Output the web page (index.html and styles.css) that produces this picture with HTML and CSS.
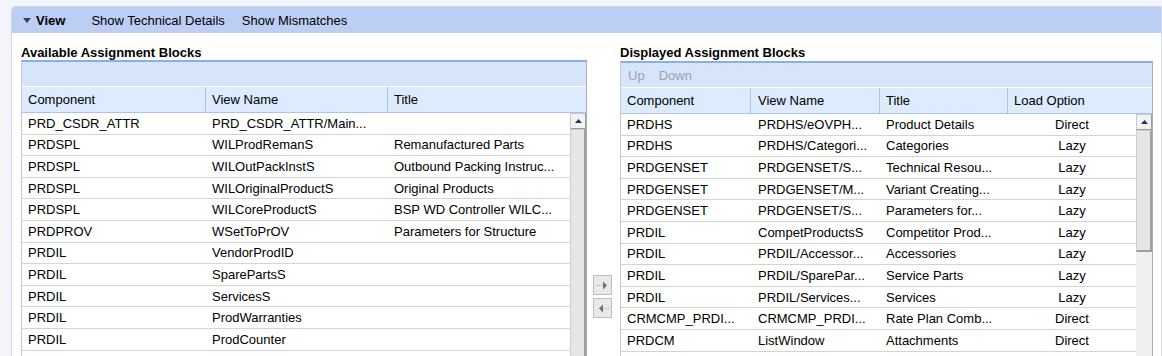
FILE: index.html
```html
<!DOCTYPE html>
<html lang="en">
<head>
  <meta charset="UTF-8" />
  <title>Assignment Blocks</title>
  <link rel="stylesheet" href="styles.css">
</head>
<body>
  <div class="panel">
    <div class="panel-header">
      <span class="view-toggle">
        <svg width="8" height="5" viewBox="0 0 8 5"><polygon points="0,0 8,0 4,5" fill="#3a3f4a"/></svg>
        View
      </span>
      <span class="header-link">Show Technical Details</span>
      <span class="header-link">Show Mismatches</span>
    </div>

    <div class="panel-body">
      <!-- Available blocks -->
      <div class="block block-left">
        <div class="block-title">Available Assignment Blocks</div>
        <div class="table">
          <div class="toolbar"></div>
          <div class="head-row cols-left">
            <div class="hcell">Component</div>
            <div class="hcell">View Name</div>
            <div class="hcell">Title</div>
          </div>
          <div class="table-body">
            <div class="rows">
              <div class="row cols-left"><span>PRD_CSDR_ATTR</span><span>PRD_CSDR_ATTR/Main...</span><span></span></div>
              <div class="row cols-left"><span>PRDSPL</span><span>WILProdRemanS</span><span>Remanufactured Parts</span></div>
              <div class="row cols-left"><span>PRDSPL</span><span>WILOutPackInstS</span><span>Outbound Packing Instruc...</span></div>
              <div class="row cols-left"><span>PRDSPL</span><span>WILOriginalProductS</span><span>Original Products</span></div>
              <div class="row cols-left"><span>PRDSPL</span><span>WILCoreProductS</span><span>BSP WD Controller WILC...</span></div>
              <div class="row cols-left"><span>PRDPROV</span><span>WSetToPrOV</span><span>Parameters for Structure</span></div>
              <div class="row cols-left"><span>PRDIL</span><span>VendorProdID</span><span></span></div>
              <div class="row cols-left"><span>PRDIL</span><span>SparePartsS</span><span></span></div>
              <div class="row cols-left"><span>PRDIL</span><span>ServicesS</span><span></span></div>
              <div class="row cols-left"><span>PRDIL</span><span>ProdWarranties</span><span></span></div>
              <div class="row cols-left"><span>PRDIL</span><span>ProdCounter</span><span></span></div>
              <div class="row cols-left"><span></span><span></span><span></span></div>
            </div>
            <div class="scrollbar">
              <div class="scroll-btn">
                <svg width="7" height="4" viewBox="0 0 7 4"><polygon points="0,4 7,4 3.5,0" fill="#1f3566"/></svg>
              </div>
              <div class="scroll-thumb thumb-long"></div>
            </div>
          </div>
        </div>
      </div>

      <!-- Move buttons -->
      <div class="move-buttons">
        <div class="move-btn">
          <svg width="14" height="13" viewBox="0 0 14 13">
            <path d="M1 6.5h1M3 6.5h1M5 6.5h1" stroke="#a8a8a8"/>
            <polygon points="7,2.5 11,6.5 7,10.5" fill="#6f6f6f"/>
          </svg>
        </div>
        <div class="move-btn">
          <svg width="14" height="13" viewBox="0 0 14 13">
            <polygon points="7,2.5 3,6.5 7,10.5" fill="#6f6f6f"/>
            <path d="M8 6.5h1M10 6.5h1M12 6.5h1" stroke="#a8a8a8"/>
          </svg>
        </div>
      </div>

      <!-- Displayed blocks -->
      <div class="block block-right">
        <div class="block-title">Displayed Assignment Blocks</div>
        <div class="table">
          <div class="toolbar">
            <span class="tool-link">Up</span>
            <span class="tool-link">Down</span>
          </div>
          <div class="head-row cols-right">
            <div class="hcell">Component</div>
            <div class="hcell">View Name</div>
            <div class="hcell">Title</div>
            <div class="hcell">Load Option</div>
          </div>
          <div class="table-body">
            <div class="rows">
              <div class="row cols-right"><span>PRDHS</span><span>PRDHS/eOVPH...</span><span>Product Details</span><span class="center">Direct</span></div>
              <div class="row cols-right"><span>PRDHS</span><span>PRDHS/Categori...</span><span>Categories</span><span class="center">Lazy</span></div>
              <div class="row cols-right"><span>PRDGENSET</span><span>PRDGENSET/S...</span><span>Technical Resou...</span><span class="center">Lazy</span></div>
              <div class="row cols-right"><span>PRDGENSET</span><span>PRDGENSET/M...</span><span>Variant Creating...</span><span class="center">Lazy</span></div>
              <div class="row cols-right"><span>PRDGENSET</span><span>PRDGENSET/S...</span><span>Parameters for...</span><span class="center">Lazy</span></div>
              <div class="row cols-right"><span>PRDIL</span><span>CompetProductsS</span><span>Competitor Prod...</span><span class="center">Lazy</span></div>
              <div class="row cols-right"><span>PRDIL</span><span>PRDIL/Accessor...</span><span>Accessories</span><span class="center">Lazy</span></div>
              <div class="row cols-right"><span>PRDIL</span><span>PRDIL/SparePar...</span><span>Service Parts</span><span class="center">Lazy</span></div>
              <div class="row cols-right"><span>PRDIL</span><span>PRDIL/Services...</span><span>Services</span><span class="center">Lazy</span></div>
              <div class="row cols-right"><span>CRMCMP_PRDI...</span><span>CRMCMP_PRDI...</span><span>Rate Plan Comb...</span><span class="center">Direct</span></div>
              <div class="row cols-right"><span>PRDCM</span><span>ListWindow</span><span>Attachments</span><span class="center">Direct</span></div>
              <div class="row cols-right"><span></span><span></span><span></span><span></span></div>
            </div>
            <div class="scrollbar">
              <div class="scroll-btn">
                <svg width="7" height="4" viewBox="0 0 7 4"><polygon points="0,4 7,4 3.5,0" fill="#1f3566"/></svg>
              </div>
              <div class="scroll-thumb thumb-short"></div>
            </div>
          </div>
        </div>
      </div>
    </div>
  </div>
</body>
</html>
```

FILE: styles.css
```css
* {
  box-sizing: border-box;
}

body {
  margin: 0;
  height: 356px;
  overflow: hidden;
  background: #f4f5fa;
  color: #000;
  font-family: "Liberation Sans", Arial, sans-serif;
  font-size: 13px;
}

.panel {
  margin: 6px 0 0 11px;
  background: #fff;
  border: 1px solid #cfd6e4;
  border-right-color: #d8dce6;
  border-radius: 5px 0 0 0;
  height: 400px;
}

.panel-header {
  height: 26px;
  display: flex;
  align-items: center;
  padding-left: 11px;
  background: #bdcef4;
  border-radius: 4px 0 0 0;
}

.view-toggle {
  display: flex;
  align-items: center;
  gap: 5px;
  font-weight: bold;
  margin-right: 26px;
}

.header-link {
  margin-right: 17px;
}

.panel-body {
  display: flex;
  padding: 12px 0 0 9px;
}

.block-left {
  width: 566px;
}

.block-right {
  width: 533px;
}

.block-title {
  font-weight: bold;
  height: 15px;
  line-height: 15px;
}

.block-right .block-title {
  height: 16px;
}

.table {
  border-top: 2px solid #8aaeeb;
  border-left: 1px solid #c4c8cf;
  border-right: 1px solid #a9adb4;
}

.toolbar {
  height: 25px;
  background: #d6e5fa;
  border-bottom: 1px solid #fff;
  display: flex;
  align-items: center;
  padding-left: 7px;
  gap: 14px;
}

.tool-link {
  color: #9ba3ad;
}

.head-row {
  display: grid;
  height: 26px;
  background: #dcebfd;
  border-bottom: 1px solid #a8c4ee;
}

.hcell {
  display: flex;
  align-items: center;
  padding-left: 6px;
  border-right: 1px solid #a8c4ee;
}

.hcell:last-child {
  border-right: none;
}

.cols-left {
  grid-template-columns: 184px 182px 1fr;
}

.cols-right {
  grid-template-columns: 130px 129px 128px 1fr;
}

.table-body {
  display: flex;
}

.rows {
  flex: 1;
}

.row {
  display: grid;
  height: 21.6px;
  border-bottom: 1px solid #d4d4d4;
  align-items: center;
}

.row span {
  padding-left: 6px;
  white-space: nowrap;
  overflow: hidden;
}

.row span.center {
  text-align: center;
  padding-left: 0;
}

.cols-right .hcell:nth-child(2),
.cols-right span:nth-child(2) {
  padding-left: 7px;
}

.scrollbar {
  width: 16px;
  background: #f0f0f0;
  display: flex;
  flex-direction: column;
}

.scroll-btn {
  height: 16px;
  border: 1px solid #c9c9c9;
  border-right-color: #9a9a9a;
  border-bottom-color: #9a9a9a;
  background: #f3f3f3;
  display: flex;
  align-items: center;
  justify-content: center;
}

.scroll-thumb {
  background: #e6e6e6;
  border: 1px solid #cfcfcf;
  border-right: 2px solid #9f9f9f;
  border-bottom: 2px solid #9f9f9f;
}

.thumb-long {
  height: 300px;
}

.thumb-short {
  height: 122px;
}

.move-buttons {
  width: 33px;
  display: flex;
  flex-direction: column;
  gap: 3px;
  padding: 230px 0 0 6px;
}

.move-btn {
  width: 19px;
  height: 20px;
  background: #e9e9e9;
  border: 1px solid #bdbdbd;
  display: flex;
  align-items: center;
  justify-content: center;
}
```
